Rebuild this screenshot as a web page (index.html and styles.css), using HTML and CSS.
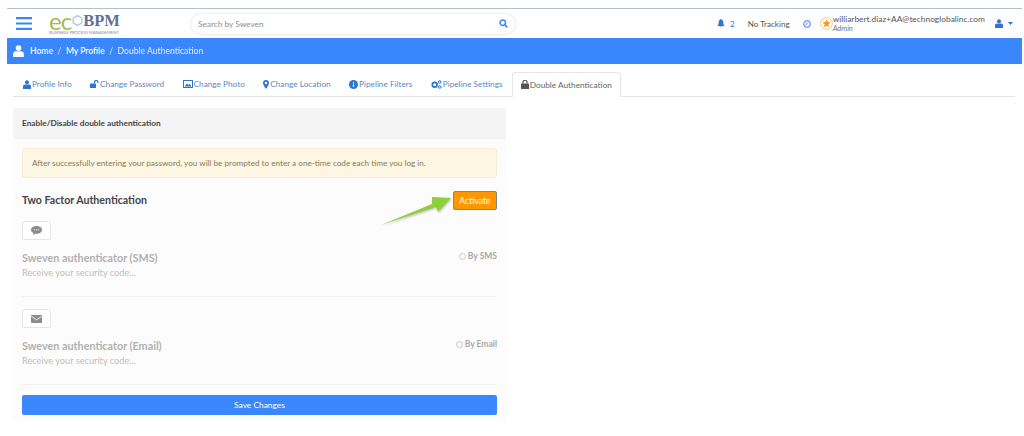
FILE: index.html
```html
<!DOCTYPE html>
<html lang="en">
<head>
    <meta charset="UTF-8">
    <title>Double Authentication</title>
    <link rel="stylesheet" href="styles.css">
</head>
<body>
    <div class="page">
        <header class="topbar">
            <svg class="burger" width="16" height="13" viewBox="0 0 16 13"><path d="M0 1.200h16M0 6.500h16M0 11.800h16" stroke="#3a87f5" stroke-width="2.200"/></svg>
            <div class="logo">
                <div class="logo-name"><span class="logo-eco">ec</span><svg class="logo-o" width="11" height="11" viewBox="0 0 11 11"><path d="M5.500.6 9.800 3V8L5.500 10.400 1.200 8V3Z" fill="none" stroke="#a9c7e8" stroke-width="1.300" stroke-linejoin="round"/></svg><span class="logo-bpm">BPM</span></div>
                <div class="logo-sub">BUSINESS PROCESS MANAGEMENT</div>
            </div>
            <div class="search">
                <span>Search by Sweven</span>
                <svg width="9" height="9" viewBox="0 0 10 10"><circle cx="4.200" cy="4.200" r="3" fill="none" stroke="#3a87f5" stroke-width="1.700"/><path d="M6.500 6.500 9.200 9.200" stroke="#3a87f5" stroke-width="1.900"/></svg>
            </div>
            <div class="top-right">
                <svg class="bell" width="8" height="9" viewBox="0 0 10 11"><path d="M5 0C3 1 2 2.500 2 5 2 7 1.500 7.500.5 8.500h9C8.500 7.500 8 7 8 5 8 2.500 7 1 5 0ZM3.800 9.300a1.300 1.300 0 0 0 2.400 0Z" fill="#2e74d4"/></svg>
                <span class="count">2</span>
                <span class="tracking">No Tracking</span>
                <svg class="clock" width="8" height="8" viewBox="0 0 10 10"><circle cx="5" cy="5" r="4" fill="none" stroke="#3a87f5" stroke-width="1.300"/><path d="M5 2.800V5.300H3" fill="none" stroke="#3a87f5"/></svg>
                <svg class="medal" width="13" height="13" viewBox="0 0 13 13"><circle cx="6.500" cy="6.500" r="5.900" fill="#fff" stroke="#f5c77e" stroke-width="1"/><path d="M6.500 2.400 7.700 5.100 10.600 5.400 8.400 7.300 9 10.200 6.500 8.700 4 10.200 4.600 7.300 2.400 5.400 5.300 5.100Z" fill="#f39c12"/></svg>
                <div class="user">
                    <div class="user-mail">williarbert.diaz+AA@technoglobalinc.com</div>
                    <div class="user-role">Admin</div>
                </div>
                <svg class="user-icon" width="8" height="9" viewBox="0 0 8 9"><circle cx="4" cy="2.200" r="2" fill="#2e74d4"/><path d="M0 9V6.500C0 5.300 1 4.600 2 4.600h4c1 0 2 .7 2 1.900V9Z" fill="#2e74d4"/></svg>
                <svg class="caret" width="5" height="3" viewBox="0 0 5 3"><path d="M0 0h5L2.500 3Z" fill="#2e74d4"/></svg>
            </div>
        </header>

        <nav class="crumbs">
            <svg width="11" height="12" viewBox="0 0 8 9"><circle cx="4" cy="2.200" r="2.100" fill="#fff"/><path d="M0 9V6.500C0 5.300 1 4.600 2 4.600h4c1 0 2 .7 2 1.900V9Z" fill="#fff"/></svg>
            <a class="crumb">Home</a><span class="sep">/</span><a class="crumb">My Profile</a><span class="sep">/</span><span class="crumb-now">Double Authentication</span>
        </nav>

        <ul class="tabs">
            <li class="tab"><svg width="8" height="9" viewBox="0 0 8 9"><circle cx="4" cy="2.200" r="2" fill="#2e74d4"/><path d="M0 9V6.500C0 5.300 1 4.600 2 4.600h4c1 0 2 .7 2 1.900V9Z" fill="#2e74d4"/></svg>Profile Info</li>
            <li class="tab"><svg width="9" height="8" viewBox="0 0 9 8"><rect x="0" y="3.500" width="6" height="4.500" rx=".6" fill="#2e74d4"/><path d="M4.500 3.500V2.200a1.700 1.700 0 0 1 3.400 0V3" fill="none" stroke="#2e74d4" stroke-width="1.200"/></svg>Change Password</li>
            <li class="tab"><svg width="10" height="8" viewBox="0 0 10 8"><rect x=".5" y=".5" width="9" height="7" fill="none" stroke="#2e74d4"/><path d="M1.500 6.500 4 3.500 5.500 5 7 4 8.500 6.500Z" fill="#2e74d4"/></svg>Change Photo</li>
            <li class="tab"><svg width="6" height="9" viewBox="0 0 6 9"><path fill-rule="evenodd" d="M3 0a3 3 0 0 1 3 3C6 5 3 9 3 9S0 5 0 3a3 3 0 0 1 3-3Zm0 1.800a1.200 1.200 0 1 0 0 2.400 1.200 1.200 0 0 0 0-2.400Z" fill="#2e74d4"/></svg>Change Location</li>
            <li class="tab"><svg width="9" height="9" viewBox="0 0 9 9"><circle cx="4.500" cy="4.500" r="4.500" fill="#2e74d4"/><path d="M4.500 2v.9M4.500 3.800V7" stroke="#fff" stroke-width="1.100"/></svg>Pipeline Filters</li>
            <li class="tab"><svg width="11" height="9" viewBox="0 0 11 9"><circle cx="3.700" cy="4.800" r="2.400" fill="none" stroke="#2e74d4" stroke-width="1.700"/><circle cx="8.800" cy="2" r="1.300" fill="none" stroke="#2e74d4"/><circle cx="8.800" cy="7" r="1.300" fill="none" stroke="#2e74d4"/></svg>Pipeline Settings</li>
            <li class="tab tab-active"><svg width="8" height="9" viewBox="0 0 8 9"><rect x="0" y="3.500" width="8" height="5.500" rx=".6" fill="#555"/><path d="M2 3.500V2.200a2 2 0 0 1 4 0V3.500" fill="none" stroke="#555" stroke-width="1.200"/></svg>Double Authentication</li>
        </ul>

        <section class="panel">
            <div class="panel-head">Enable/Disable double authentication</div>
            <div class="panel-body">
                <div class="notice">After successfully entering your password, you will be prompted to enter a one-time code each time you log in.</div>

                <div class="two-factor">
                    <h3>Two Factor Authentication</h3>
                    <button class="btn-activate">Activate</button>
                    <svg class="arrow" width="73" height="32" viewBox="0 0 73 32"><path d="M1 30 52 9 52 2 71 3 58 17 56 12Z" fill="#8fcf3c"/></svg>
                </div>

                <div class="method">
                    <div class="method-icon"><svg width="11" height="9" viewBox="0 0 11 9"><path d="M5.500 0C8.500 0 11 1.700 11 3.900S8.500 7.800 5.500 7.800L4.500 7.700 2 9 2.500 7C1 6.300 0 5.200 0 3.900 0 1.700 2.500 0 5.500 0Z" fill="#8c8c8c"/><path d="M3 3.900h1M5 3.900h1M7 3.900h1" stroke="#fdfdfd" stroke-width="1"/></svg></div>
                    <div class="method-row">
                        <div class="method-title">Sweven authenticator (SMS)</div>
                        <label class="method-radio"><span class="radio"></span>By SMS</label>
                    </div>
                    <div class="method-text">Receive your security code...</div>
                </div>

                <div class="method">
                    <div class="method-icon"><svg width="11" height="8" viewBox="0 0 11 8"><rect width="11" height="8" rx=".8" fill="#8c8c8c"/><path d="M.3 1.300 5.500 4.800 10.700 1.300" fill="none" stroke="#fdfdfd" stroke-width=".9"/></svg></div>
                    <div class="method-row">
                        <div class="method-title">Sweven authenticator (Email)</div>
                        <label class="method-radio"><span class="radio"></span>By Email</label>
                    </div>
                    <div class="method-text">Receive your security code...</div>
                </div>

                <button class="btn-save">Save Changes</button>
            </div>
        </section>
    </div>
</body>
</html>
```

FILE: styles.css
```css
* {
    box-sizing: border-box;
}
body {
    margin: 0;
    background-color: #fff;
    font-family: "Lato", "Open Sans", sans-serif;
    font-size: 9px;
    color: #555;
}
.page {
    padding: 8px 2px 0 7px;
}
.topbar {
    display: flex;
    align-items: center;
    height: 30px;
    border-top: 1px solid #b4c0d2;
    background-color: #fff;
}
.burger {
    margin-left: 9px;
}
.logo {
    margin-left: 17px;
    width: 72px;
}
.logo-name {
    display: flex;
    align-items: center;
    height: 15px;
    line-height: 15px;
}
.logo-eco {
    font-size: 24px;
    font-weight: 400;
    color: #a3bd47;
    letter-spacing: -1px;
}
.logo-o {
    margin-left: 1px;
}
.logo-bpm {
    font-family: "Liberation Serif", serif;
    font-size: 16.500px;
    font-weight: bold;
    color: #5f7391;
}
.logo-sub {
    margin-top: 2px;
    font-size: 4.200px;
    line-height: 5px;
    color: #888;
    white-space: nowrap;
}
.search {
    display: flex;
    justify-content: space-between;
    align-items: center;
    width: 324px;
    height: 20px;
    margin-left: 70px;
    padding: 0 7px 0 7px;
    border-radius: 10px;
    box-shadow: 0 0 3px rgba(0, 0, 0, 0.16);
    color: #8a8f96;
    font-size: 8.300px;
}
.top-right {
    display: flex;
    align-items: center;
    margin-left: auto;
    padding-right: 9px;
    color: #555;
}
.count {
    margin-left: 5px;
    color: #2e74d4;
    font-size: 8px;
}
.tracking {
    margin-left: 13px;
    font-size: 8.100px;
}
.clock {
    margin-left: 13px;
}
.medal {
    margin-left: 9px;
}
.user {
    margin-top: -2px;
}
.user-mail {
    font-size: 8.400px;
    line-height: 12px;
}
.user-role {
    font-size: 7.500px;
    line-height: 8px;
    font-style: italic;
    color: #777;
}
.user-icon {
    margin-left: 10px;
}
.caret {
    margin-left: 5px;
}
.crumbs {
    display: flex;
    align-items: center;
    height: 26px;
    padding-left: 6px;
    background-color: #3a87fb;
    color: #fff;
    font-size: 8.600px;
}
.crumb {
    font-weight: 500;
}
.crumbs svg {
    margin-right: 6px;
}
.sep {
    margin: 0 4.500px;
    opacity: 0.8;
}
.crumb-now {
    opacity: 0.85;
}
.tabs {
    display: flex;
    align-items: stretch;
    list-style: none;
    margin: 8px 0 0 6px;
    padding: 0 0 0 .8px;
    height: 25px;
    width: 1002px;
    border-bottom: 1px solid #e4e6e9;
}
.tab {
    display: flex;
    align-items: center;
    gap: 1px;
    padding: 0 9.200px;
    color: #5b8ac4;
    font-size: 8.250px;
    white-space: nowrap;
}
.tab-active {
    margin-bottom: -1px;
    padding: 0 8px;
    border: 1px solid #e4e6e9;
    border-bottom-color: #fff;
    border-radius: 3px 3px 0 0;
    background-color: #fff;
    color: #666;
}
.panel {
    width: 493px;
    margin: 11px 0 0 6px;
    background-color: #fcfcfc;
}
.panel-head {
    display: flex;
    align-items: center;
    height: 31px;
    padding: 0 0 2px 9px;
    background-color: #f4f4f4;
    color: #444;
    font-size: 8.250px;
    font-weight: 700;
}
.panel-body {
    padding: 9px 9px 7px;
}
.notice {
    display: flex;
    align-items: center;
    height: 30px;
    padding-left: 9px;
    background-color: #fdf6e3;
    border: 1px solid #f8edd0;
    border-radius: 3px;
    color: #8a7a55;
    font-size: 8.170px;
}
.two-factor {
    position: relative;
    display: flex;
    justify-content: space-between;
    align-items: center;
    margin-top: 13px;
}
.two-factor h3 {
    margin: -2px 0 0;
    font-size: 10.600px;
    font-weight: 700;
    color: #444;
}
.btn-activate {
    width: 44px;
    height: 19px;
    padding: 0;
    background-color: #ff9800;
    border: 1px solid #7d8a8c;
    border-radius: 2px;
    color: #fff;
    font-family: inherit;
    font-size: 8.600px;
}
.arrow {
    position: absolute;
    top: 4px;
    right: 44px;
    filter: drop-shadow(1px 1px 1px rgba(0, 0, 0, 0.25));
}
.method {
    margin-top: 12px;
    padding-bottom: 18px;
    border-bottom: 1px solid #f2f2f2;
}
.two-factor + .method {
    margin-top: 11px;
}
.method-icon {
    display: flex;
    align-items: center;
    justify-content: center;
    width: 29px;
    height: 19px;
    background-color: #fff;
    border: 1px solid #e6e6e6;
    border-radius: 2px;
}
.method-row {
    display: flex;
    justify-content: space-between;
    align-items: flex-start;
    margin-top: 11px;
}
.method-title {
    font-size: 10.800px;
    font-weight: 700;
    line-height: 14px;
    color: #b0b0b0;
}
.method-radio {
    display: flex;
    align-items: center;
    gap: 2px;
    height: 10px;
    font-size: 8.500px;
    font-weight: 700;
    color: #a8a8a8;
}
.radio {
    width: 7px;
    height: 7px;
    border: 1px solid #c8c8c8;
    border-radius: 50%;
}
.method-text {
    margin-top: 2px;
    font-size: 9.200px;
    line-height: 11px;
    color: #c0c0c0;
}
.btn-save {
    display: block;
    width: 100%;
    height: 20px;
    margin-top: 10px;
    background-color: #3a87fb;
    border: 0;
    border-radius: 2px;
    color: #fff;
    font-family: inherit;
    font-size: 8.400px;
}
```
